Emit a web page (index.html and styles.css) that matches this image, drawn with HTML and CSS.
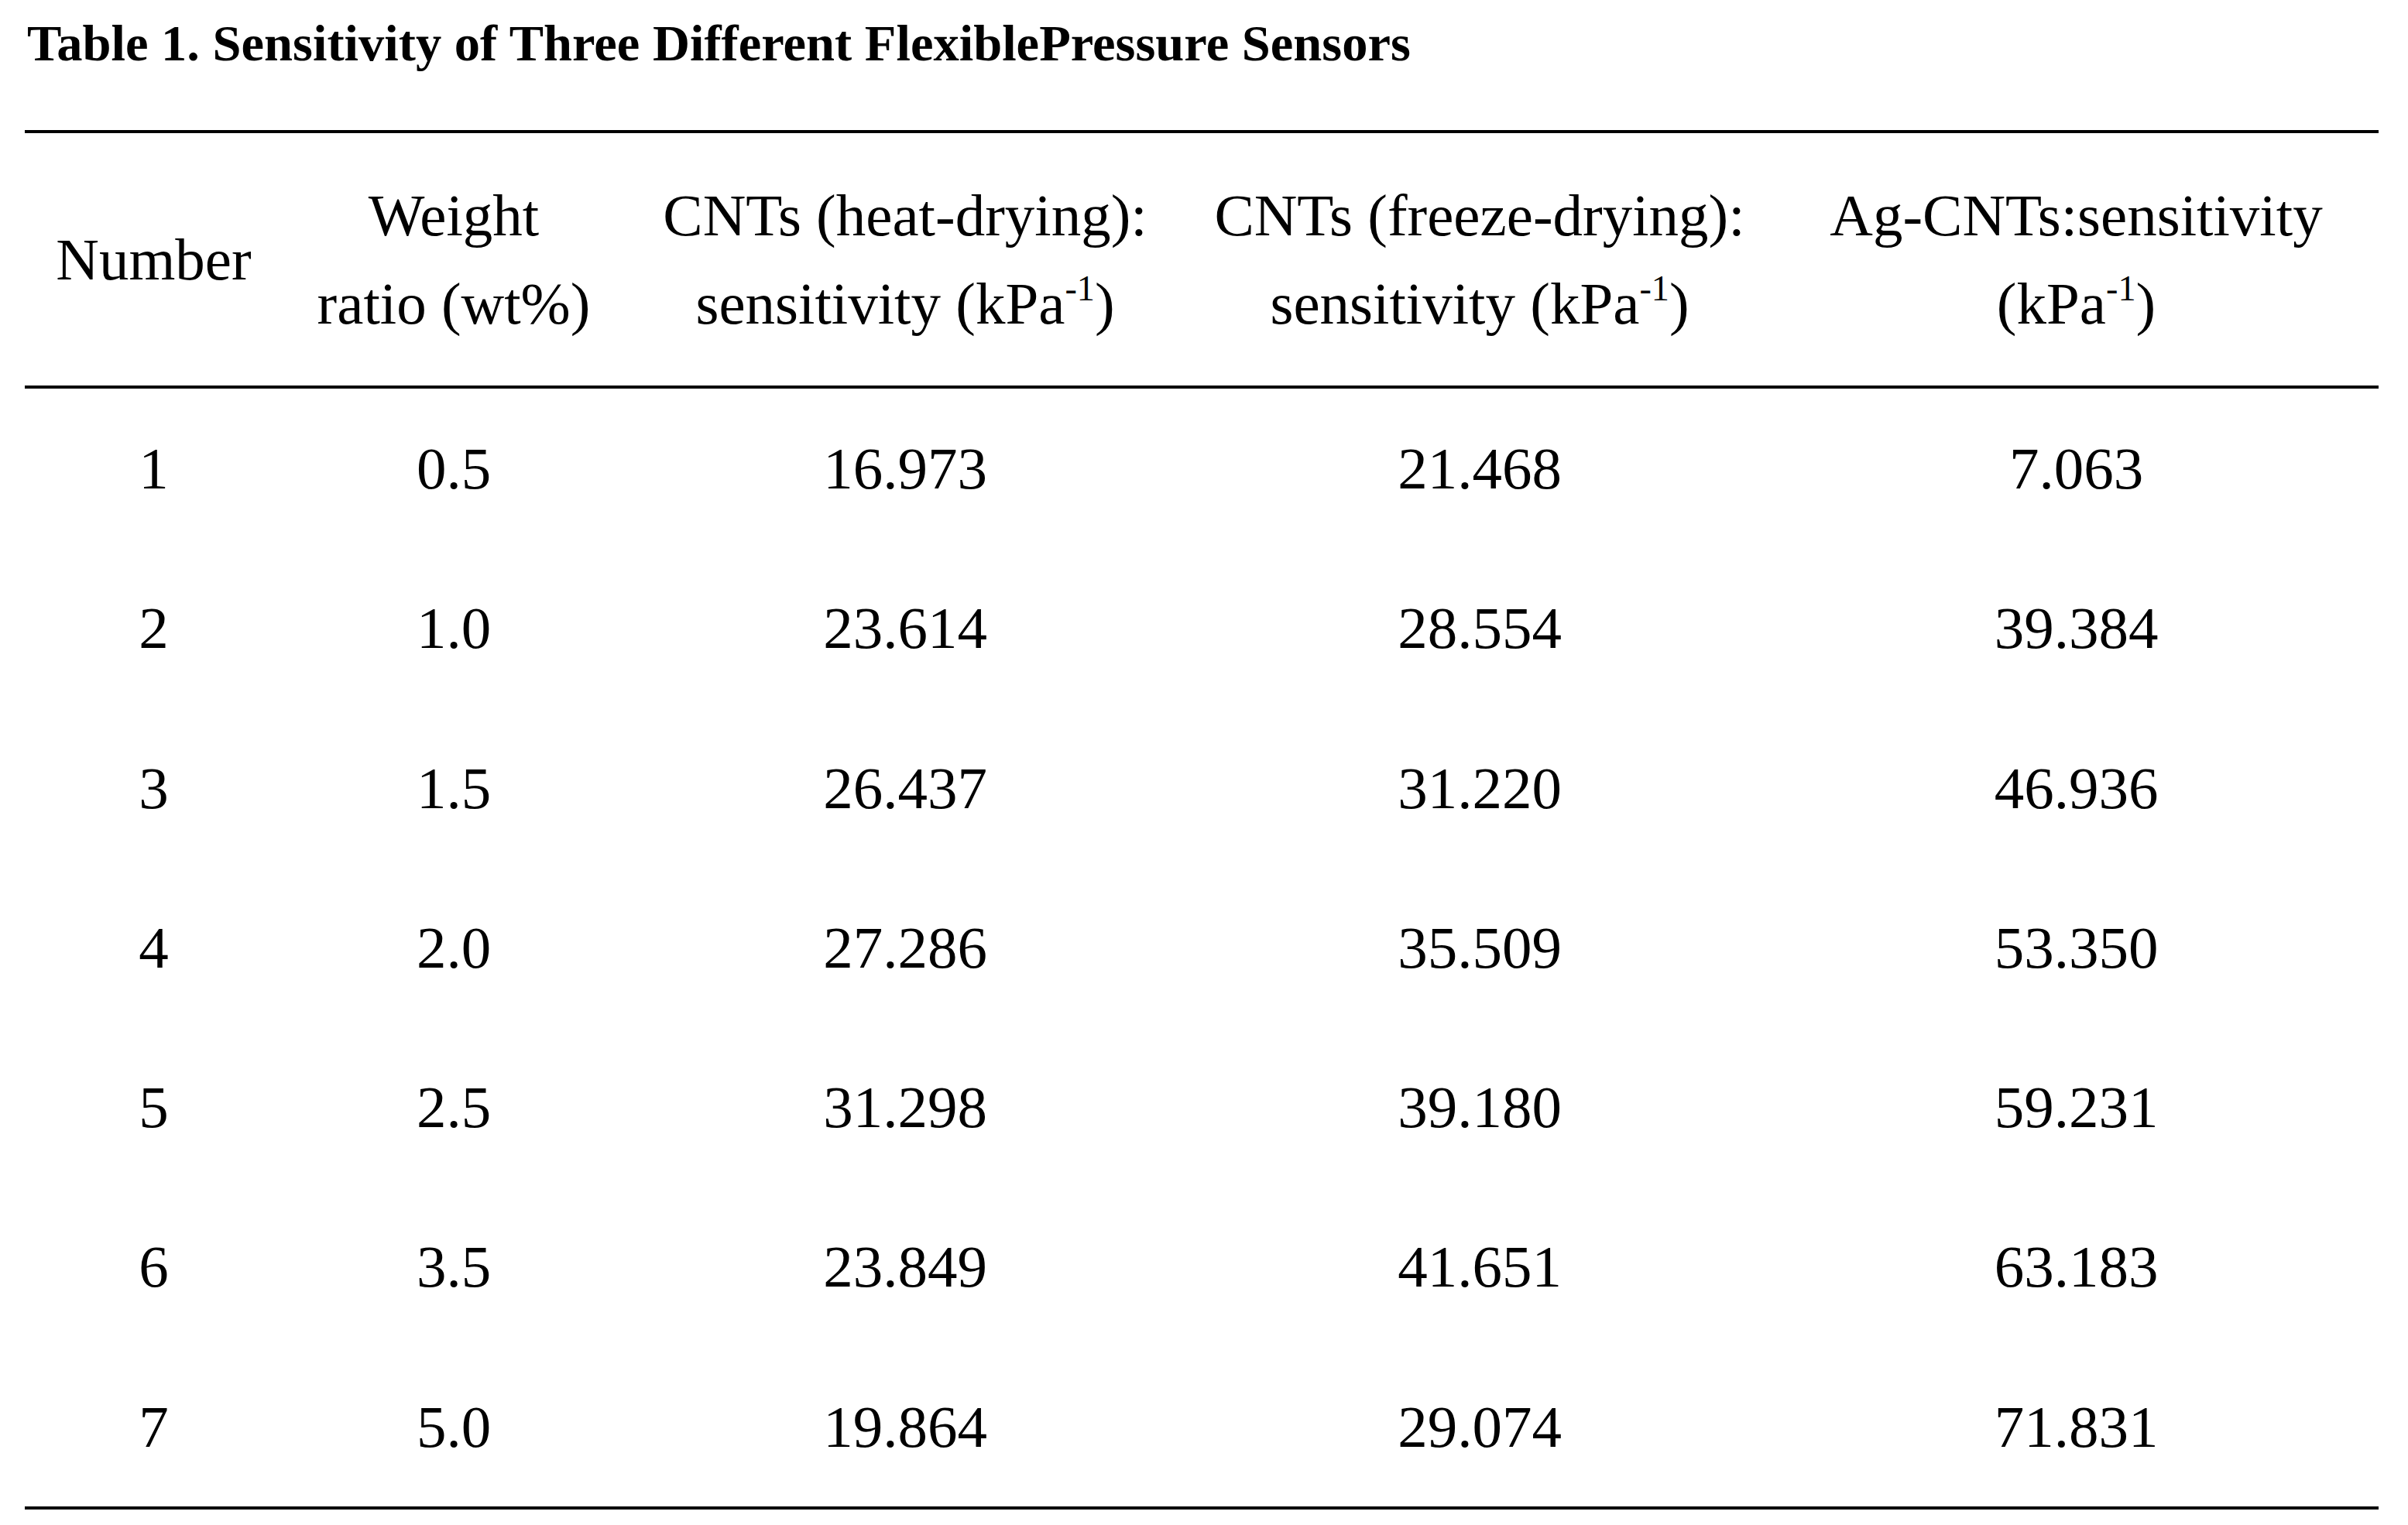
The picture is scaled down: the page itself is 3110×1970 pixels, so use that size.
FILE: index.html
```html
<!DOCTYPE html>
<html lang="en">
<head>
<meta charset="utf-8">
<title>Table 1. Sensitivity of Three Different Flexible Pressure Sensors</title>
<link rel="stylesheet" href="styles.css">
</head>
<body>
<div class="page">
  <h1 class="caption">Table 1. Sensitivity of Three Different FlexiblePressure Sensors</h1>
  <table class="data">
    <colgroup>
      <col class="c1"><col class="c2"><col class="c3"><col class="c4"><col class="c5">
    </colgroup>
    <thead>
      <tr>
        <th>Number</th>
        <th>Weight<br>ratio (wt%)</th>
        <th>CNTs (heat-drying):<br>sensitivity (kPa<sup>-1</sup>)</th>
        <th>CNTs (freeze-drying):<br>sensitivity (kPa<sup>-1</sup>)</th>
        <th>Ag-CNTs:sensitivity<br>(kPa<sup>-1</sup>)</th>
      </tr>
    </thead>
    <tbody>
      <tr><td>1</td><td>0.5</td><td>16.973</td><td>21.468</td><td>7.063</td></tr>
      <tr><td>2</td><td>1.0</td><td>23.614</td><td>28.554</td><td>39.384</td></tr>
      <tr><td>3</td><td>1.5</td><td>26.437</td><td>31.220</td><td>46.936</td></tr>
      <tr><td>4</td><td>2.0</td><td>27.286</td><td>35.509</td><td>53.350</td></tr>
      <tr><td>5</td><td>2.5</td><td>31.298</td><td>39.180</td><td>59.231</td></tr>
      <tr><td>6</td><td>3.5</td><td>23.849</td><td>41.651</td><td>63.183</td></tr>
      <tr class="last"><td>7</td><td>5.0</td><td>19.864</td><td>29.074</td><td>71.831</td></tr>
    </tbody>
  </table>
</div>
</body>
</html>
```

FILE: styles.css
```css
html, body {
  margin: 0;
  padding: 0;
  background: #ffffff;
}

body {
  font-family: "Liberation Serif", "Times New Roman", serif;
  color: #000000;
}

.page {
  padding: 22px 38px 0 32px;
}

.caption {
  margin: 0 0 78px 0;
  font-size: 66.5px;
  line-height: 68px;
  font-weight: bold;
  padding-left: 3px;
  white-space: nowrap;
}

.data {
  width: 3040px;
  table-layout: fixed;
  border-collapse: separate;
  border-spacing: 0;
  font-size: 77px;
}

.c1 { width: 333px; }
.c2 { width: 442px; }
.c3 { width: 724px; }
.c4 { width: 760px; }
.c5 { width: 781px; }

.data th {
  font-weight: normal;
  text-align: center;
  vertical-align: middle;
  padding: 49px 0;
  line-height: 114px;
  border-top: 4px solid #000000;
  border-bottom: 4px solid #000000;
  white-space: nowrap;
}

.data sup {
  font-size: 0.6em;
  line-height: 0;
  vertical-align: 0.66em;
}

.data td {
  text-align: center;
  vertical-align: middle;
  padding: 0;
  height: 206.3px;
  line-height: 206.3px;
}

.data tr.last td {
  border-bottom: 4px solid #000000;
}
```
